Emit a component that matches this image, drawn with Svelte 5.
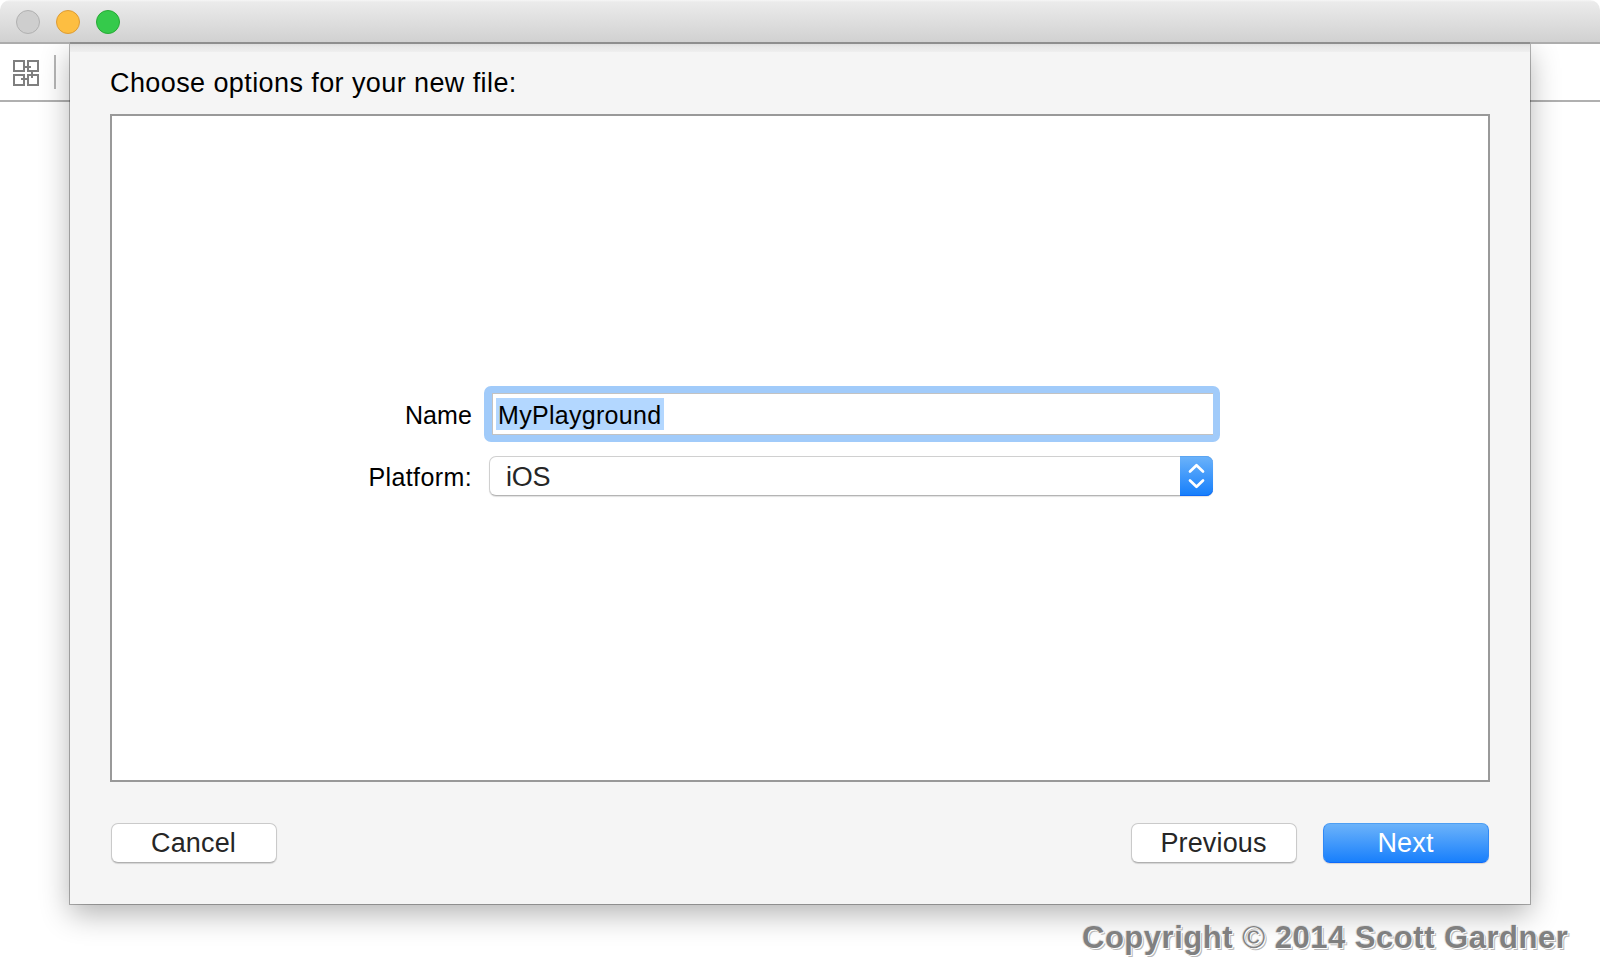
<script>
  let name = $state('MyPlayground');
  let platform = $state('iOS');
</script>

<div class="window">
  <header class="titlebar">
    <i class="light off"></i>
    <i class="light min"></i>
    <i class="light zoom"></i>
  </header>
  <div class="toolbar">
    <svg width="26" height="26" viewBox="0 0 26 26" fill="none" stroke="#7f7f7f" stroke-width="2">
      <path d="M1 1H11V11H1ZM15 1H25V11H15ZM1 15H11V25H1ZM15 15H25V25H15Z" />
      <path d="M12 7H18M19 12V18M8 19H14" />
    </svg>
    <span class="divider"></span>
  </div>

  <section class="sheet">
    <h1>Choose options for your new file:</h1>
    <div class="panel">
      <div class="row">
        <span class="label name">Name</span>
        <div class="field"><span class="selected">{name}</span></div>
      </div>
      <div class="row second">
        <span class="label">Platform:</span>
        <div class="popup">
          <span class="value">{platform}</span>
          <span class="arrows">
            <svg width="33" height="40" viewBox="0 0 33 40" fill="none" stroke="#fff" stroke-width="2.7" stroke-linecap="round" stroke-linejoin="round">
              <path d="M10 15.5L16.5 9.2L23 15.5M10 24.5L16.5 30.8L23 24.5" />
            </svg>
          </span>
        </div>
      </div>
    </div>
    <footer>
      <button>Cancel</button>
      <span class="grow"></span>
      <button>Previous</button>
      <button class="primary">Next</button>
    </footer>
  </section>
  <p class="copyright">Copyright <span class="mark">©</span> 2014 Scott Gardner</p>
</div>

<style>
  :global(body) { margin: 0; background: #fff; }
  .window {
    box-sizing: border-box;
    width: 1600px; height: 975px;
    position: relative; overflow: hidden;
    background: #fff; color: #000;
    font-family: "Liberation Sans", Arial, sans-serif;
    display: flex; flex-direction: column;
  }
  .titlebar {
    box-sizing: border-box;
    height: 44px; flex: none;
    display: flex; align-items: flex-start; gap: 16px;
    padding: 10px 16px;
    border-radius: 10px 10px 0 0;
    border-bottom: 2px solid #acacac;
    background: linear-gradient(#f6f6f6 0, #ebebeb 2px, #d1d1d1 42px);
    position: relative; z-index: 2;
  }
  .titlebar::after {
    content: ""; position: absolute; left: 70px; right: 70px; bottom: -2px; height: 2px;
    background: #8e8e8e;
  }
  .light { box-sizing: border-box; width: 24px; height: 24px; border-radius: 50%; border: 1px solid; }
  .off { background: #cecece; border-color: #b1b1b1; }
  .min { background: #fdbe41; border-color: #dd9c35; }
  .zoom { background: #35ca4b; border-color: #27aa35; }
  .toolbar {
    box-sizing: border-box;
    height: 58px; flex: none;
    display: flex; align-items: flex-start;
    padding: 16px 0 0 13px;
    border-bottom: 2px solid #b0b0b0;
  }
  .divider { width: 2px; height: 34px; margin: -5px 0 0 15px; background: #b6b6b6; }
  .sheet {
    box-sizing: border-box;
    width: 1460px; height: 860px; flex: none;
    margin: -58px auto 0;
    padding: 0 40px;
    background: linear-gradient(#dedede 0, #e8e8e8 3px, #ededed 7px, #f0f0f0 8px, #f5f5f5 8px);
    box-shadow: 0 0 0 1px rgba(0,0,0,.28), 0 10px 28px rgba(0,0,0,.3);
    position: relative; z-index: 1;
    display: flex; flex-direction: column;
  }
  h1 { margin: 23px 0 0; height: 47px; font-size: 27px; line-height: 32px; font-weight: 400; letter-spacing: .41px; white-space: nowrap; }
  .panel {
    box-sizing: border-box;
    height: 668px; border: 2px solid #999; background: #fff;
    padding: 270px 0 0 240px;
  }
  .row { display: flex; align-items: center; height: 56px; }
  .row.second { height: 40px; margin-top: 14px; }
  .label { width: 120px; margin-right: 1px; text-align: right; font-size: 25px; letter-spacing: .4px; line-height: 32px; padding-top: 2px; }
  .label.name { letter-spacing: .1px; }
  .field {
    box-sizing: border-box; width: 736px; height: 56px; margin-left: 11px;
    border: 7px solid #a1cbfa; border-left-width: 8px; border-radius: 7px;
    box-shadow: inset 0 1px #c2c2c2, inset 0 -1px #c2c2c2, inset 1px 0 #c2c2c2;
    padding: 5px 0 0 4px;
  }
  .selected { display: inline-block; box-sizing: border-box; width: 168px; height: 32px; padding-left: 2px; font-size: 25px; line-height: 34px; letter-spacing: .3px; background: #b3d7ff; white-space: nowrap; }
  .popup {
    box-sizing: border-box; width: 724px; height: 40px; margin-left: 16px;
    display: flex; border-radius: 7px; background: #fff;
    border: 1px solid #d0d0d0; border-bottom-color: #b4b4b4;
    box-shadow: 0 1px 1px rgba(0,0,0,.12);
  }
  .value { flex: 1; padding-left: 16px; font-size: 27px; line-height: 40px; height: 38px; letter-spacing: -.2px; color: #262626; }
  .arrows { width: 33px; height: 40px; margin: -1px -1px -1px 0; border-radius: 0 7px 7px 0; background: linear-gradient(#6cb3fa, #157efb); box-shadow: inset 0 -1px #0d6af5, inset 0 1px #5ba5f2; }
  .arrows svg { display: block; }
  footer { display: flex; margin-top: 41px; padding: 0 1px; }
  .grow { flex: 1; }
  button {
    box-sizing: border-box; width: 166px; height: 40px; padding: 0 1px 0 0; margin: 0;
    border: 1px solid #cacaca; border-bottom-color: #b0b0b0; border-radius: 7px;
    background: #fff; box-shadow: 0 1px 1px rgba(0,0,0,.14);
    font: 27px/38px "Liberation Sans", Arial, sans-serif; letter-spacing: .15px; color: #262626;
  }
  .primary {
    margin-left: 26px; color: #fff;
    border-color: #4e9ff3 #3089f6 #0d69fa;
    background: linear-gradient(#6eb4fa, #167efc) border-box;
  }
  .copyright {
    position: absolute; left: 1082px; top: 920px; margin: 0;
    font-size: 31px; line-height: 36px; font-weight: 700; letter-spacing: .52px; white-space: nowrap;
    color: #808080;
    text-shadow: 1px 1px 0 #fff, -1px 0 0 #e0e0e0, 0 -1px 0 #e0e0e0, 2px 2px 0 #b8b8b8;
    z-index: 3;
  }
  .mark { font-weight: 400; }
</style>
